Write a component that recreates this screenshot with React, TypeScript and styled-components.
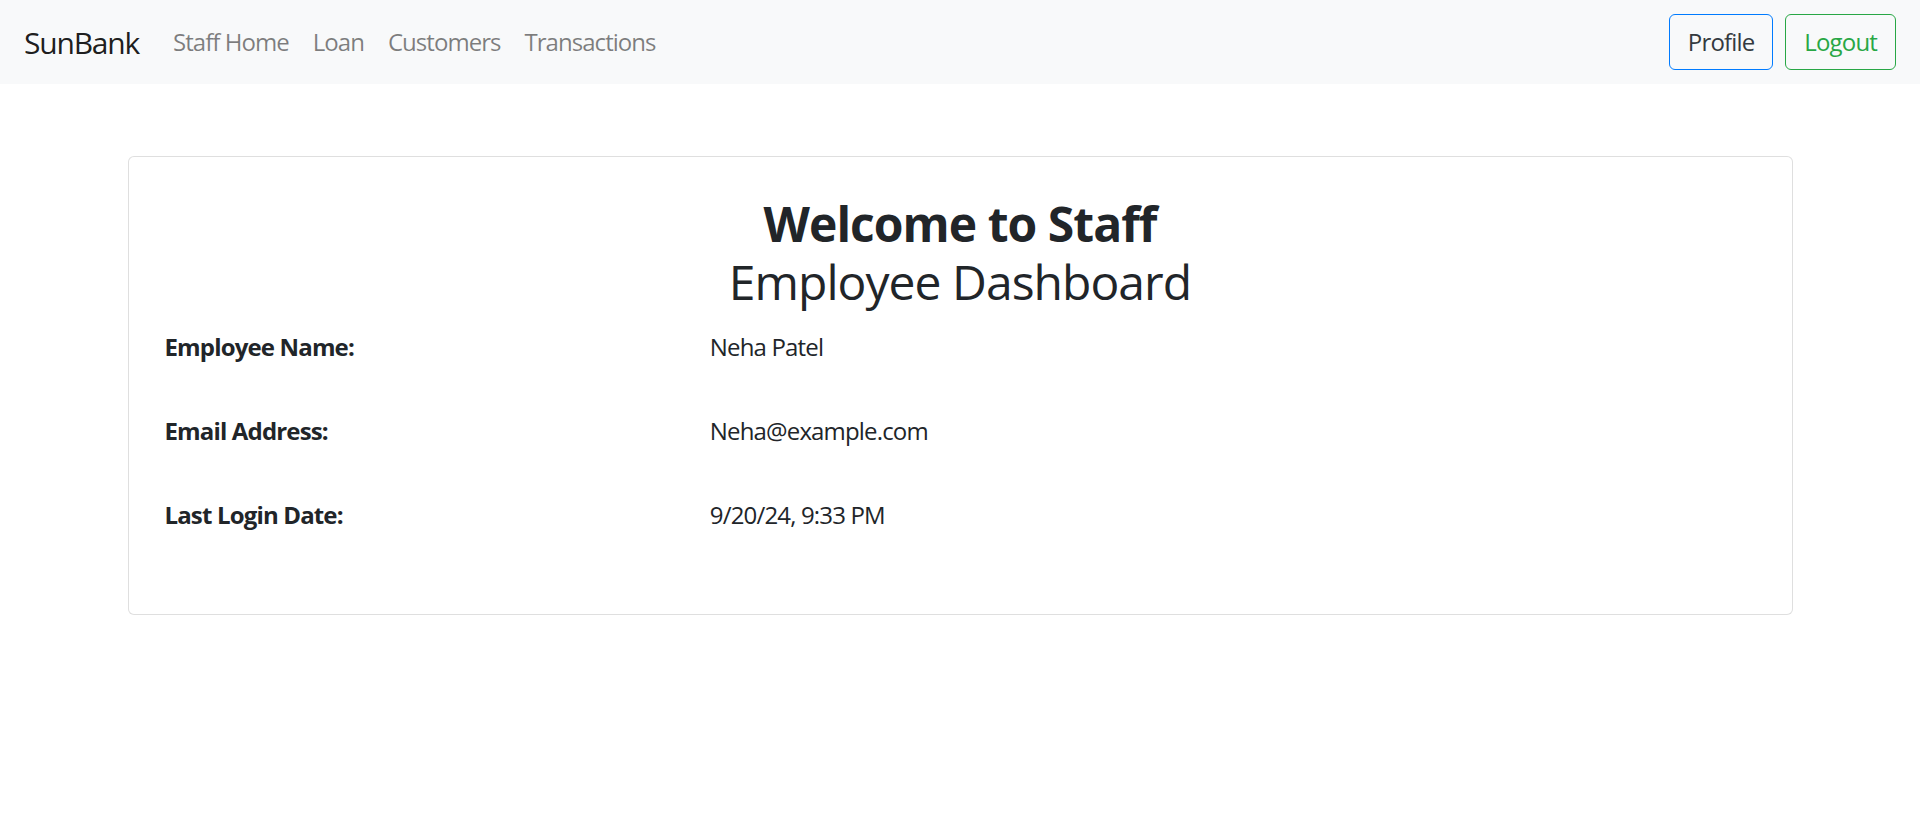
import styled, { createGlobalStyle } from "styled-components"

const GlobalStyle = createGlobalStyle`
    html, body {
        margin: 0;
        padding: 0;
        background: #fff;
    }
    body {
        font-family: "Open Sans", "Noto Sans", "Liberation Sans", sans-serif;
        font-size: 24px;
        line-height: 1.5;
        letter-spacing: -0.035em;
        color: #212529;
    }
    * {
        box-sizing: border-box;
    }
`

const Navbar = styled.nav`
    display: flex;
    align-items: center;
    height: 84px;
    padding: 12px 24px;
    background-color: #f8f9fa;
`

const Brand = styled.a`
    font-size: 30px;
    line-height: 45px;
    margin-right: 22px;
    letter-spacing: -0.04em;
    color: rgba(0, 0, 0, 0.9);
    text-decoration: none;
`

const NavLinks = styled.div`
    display: flex;
    flex: 1 1 auto;
    align-items: center;
`

const NavLink = styled.a`
    font-size: 24px;
    line-height: 36px;
    padding: 12px;
    letter-spacing: -0.04em;
    color: rgba(0, 0, 0, 0.5);
    text-decoration: none;
`

const Actions = styled.div`
    display: flex;
    gap: 12px;
`

const OutlineButton = styled.button<{ $border: string; $color: string }>`
    font-family: inherit;
    font-size: 24px;
    line-height: 36px;
    letter-spacing: -0.035em;
    padding: 9px 18px;
    background: transparent;
    border: 1.5px solid ${props => props.$border};
    border-radius: 6px;
    color: ${props => props.$color};
    cursor: pointer;
`

const Container = styled.div`
    max-width: 1710px;
    margin: 72px auto 0;
    padding: 0 22.5px;
`

const Card = styled.div`
    border: 1.5px solid rgba(0, 0, 0, 0.125);
    border-radius: 6px;
    padding: 36px 36px 33px;
    background: #fff;
`

const Title = styled.h2`
    margin: 0 0 19px;
    padding-top: 2px;
    text-align: center;
    font-size: 48px;
    line-height: 1.2;
    font-weight: 400;
    letter-spacing: -0.02em;
    strong {
        font-weight: 700;
    }
`

const InfoRow = styled.div`
    display: grid;
    grid-template-columns: 1fr 2fr;
    margin: 0 -22.5px 48px;
    line-height: 36px;

    & > * {
        padding: 0 22.5px;
    }
`

const Label = styled.strong`
    font-weight: 700;
`

const Value = styled.span``

const details = [
    { label: "Employee Name:", value: "Neha Patel" },
    { label: "Email Address:", value: "Neha@example.com" },
    { label: "Last Login Date:", value: "9/20/24, 9:33 PM" },
]

export default function App() {
    return (
        <>
            <GlobalStyle />
            <Navbar>
                <Brand href="#">SunBank</Brand>
                <NavLinks>
                    <NavLink href="#">Staff Home</NavLink>
                    <NavLink href="#">Loan</NavLink>
                    <NavLink href="#">Customers</NavLink>
                    <NavLink href="#">Transactions</NavLink>
                </NavLinks>
                <Actions>
                    <OutlineButton $border="#007bff" $color="#343a40">Profile</OutlineButton>
                    <OutlineButton $border="#28a745" $color="#28a745">Logout</OutlineButton>
                </Actions>
            </Navbar>
            <Container>
                <Card>
                    <Title>
                        <strong>Welcome to Staff</strong>
                        <br />
                        Employee Dashboard
                    </Title>
                    {details.map(d => (
                        <InfoRow key={d.label}>
                            <Label>{d.label}</Label>
                            <Value>{d.value}</Value>
                        </InfoRow>
                    ))}
                </Card>
            </Container>
        </>
    )
}
